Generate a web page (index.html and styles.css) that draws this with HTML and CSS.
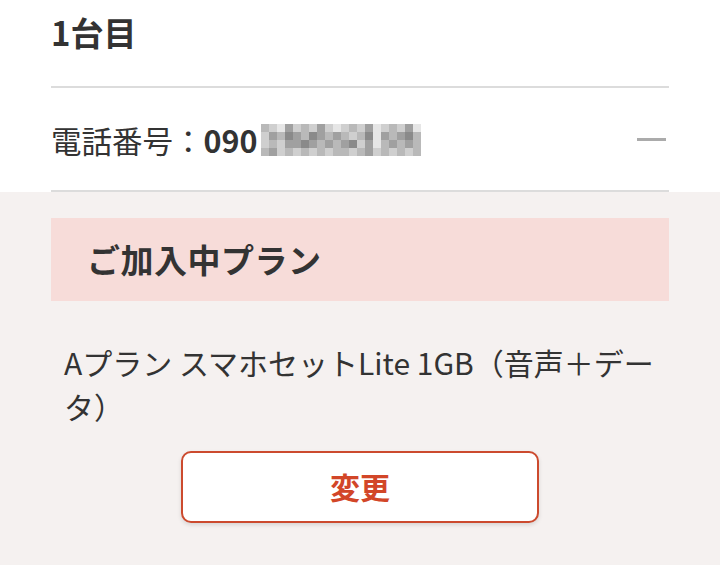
FILE: index.html
```html
<!DOCTYPE html>
<html lang="ja">
<head>
<meta charset="utf-8">
<link rel="stylesheet" href="styles.css">
</head>
<body>
<section class="top">
  <h2 class="device-title">1台目</h2>
  <div class="phone-row">
    <div class="phone">
      <span class="phone-label">電話番号：</span><span class="phone-num">090</span>
      <span class="mosaic">
        <i class="g3"></i><i class="g2"></i><i class="g1"></i><i class="g4"></i><i class="g2"></i><i class="g3"></i><i class="g2"></i><i class="g4"></i><i class="g2"></i><i class="g1"></i><i class="g2"></i><i class="g3"></i><i class="g2"></i><i class="g4"></i><i class="g1"></i><i class="g2"></i><i class="g3"></i><i class="g2"></i><i class="g4"></i><i class="g1"></i>
        <i class="g2"></i><i class="g4"></i><i class="g3"></i><i class="g5"></i><i class="g4"></i><i class="g3"></i><i class="g5"></i><i class="g4"></i><i class="g3"></i><i class="g4"></i><i class="g3"></i><i class="g2"></i><i class="g3"></i><i class="g5"></i><i class="g1"></i><i class="g4"></i><i class="g3"></i><i class="g4"></i><i class="g5"></i><i class="g3"></i>
        <i class="g2"></i><i class="g3"></i><i class="g2"></i><i class="g4"></i><i class="g4"></i><i class="g5"></i><i class="g4"></i><i class="g3"></i><i class="g4"></i><i class="g3"></i><i class="g4"></i><i class="g5"></i><i class="g2"></i><i class="g4"></i><i class="g1"></i><i class="g3"></i><i class="g4"></i><i class="g3"></i><i class="g4"></i><i class="g3"></i>
        <i class="g3"></i><i class="g4"></i><i class="g2"></i><i class="g3"></i><i class="g2"></i><i class="g3"></i><i class="g2"></i><i class="g3"></i><i class="g2"></i><i class="g3"></i><i class="g3"></i><i class="g2"></i><i class="g3"></i><i class="g4"></i><i class="g2"></i><i class="g3"></i><i class="g2"></i><i class="g3"></i><i class="g2"></i><i class="g3"></i>
      </span>
    </div>
    <span class="minus"></span>
  </div>
</section>
<section class="plan-area">
  <div class="plan-head">ご加入中プラン</div>
  <p class="plan-name">Aプラン スマホセットLite 1GB（音声＋データ）</p>
  <div class="btn-wrap">
    <button class="btn-change">変更</button>
  </div>
</section>
</body>
</html>
```
FILE: styles.css
```css
* { box-sizing: border-box; }
html, body {
  margin: 0;
  padding: 0;
}
body {
  font-family: "Noto Sans CJK JP", "Noto Sans", sans-serif;
  color: #333;
  background: #f5f1f0;
  width: 720px;
  height: 565px;
  overflow: hidden;
}
.top {
  background: #fff;
  padding: 0 51px;
}
.device-title {
  margin: 0;
  padding-top: 10px;
  height: 88px;
  font-size: 33px;
  line-height: 45px;
  font-weight: 700;
  border-bottom: 2px solid #dcdcdc;
}
.phone-row {
  height: 104px;
  display: flex;
  align-items: center;
  justify-content: space-between;
  border-bottom: 2px solid #dcdcdc;
  padding-top: 2px;
}
.phone {
  display: flex;
  align-items: center;
  font-size: 30.5px;
  line-height: 40px;
}
.phone-num {
  font-weight: 700;
}
.mosaic {
  display: grid;
  grid-template-columns: repeat(20, 8px);
  grid-auto-rows: 8px;
  margin-left: 3px;
}
.mosaic i { display: block; }
.g1 { background: #e6e6e6; }
.g2 { background: #cfcfcf; }
.g3 { background: #b9b9b9; }
.g4 { background: #a0a0a0; }
.g5 { background: #8a8a8a; }
.minus {
  width: 29px;
  height: 3px;
  background: #ababab;
  margin-right: 3px;
  margin-top: -2px;
}
.plan-area {
  padding: 26px 51px 0;
}
.plan-head {
  background: #f7dcd9;
  height: 83px;
  display: flex;
  align-items: center;
  padding-left: 36px;
  padding-bottom: 2px;
  font-size: 33px;
  letter-spacing: 0.5px;
  font-weight: 700;
}
.plan-name {
  margin: 39px 0 0;
  padding: 0 13px;
  font-size: 30px;
  line-height: 44px;
  font-weight: 400;
}
.btn-wrap {
  display: flex;
  justify-content: center;
  margin-top: 23px;
}
.btn-change {
  width: 358px;
  height: 72px;
  background: #fff;
  border: 2px solid #cc4a2e;
  border-radius: 10px;
  box-shadow: 0 2px 4px rgba(0,0,0,0.12);
  color: #d24628;
  font-family: "Noto Sans CJK JP", sans-serif;
  font-size: 30px;
  font-weight: 700;
  padding: 0 0 2px;
}
```
